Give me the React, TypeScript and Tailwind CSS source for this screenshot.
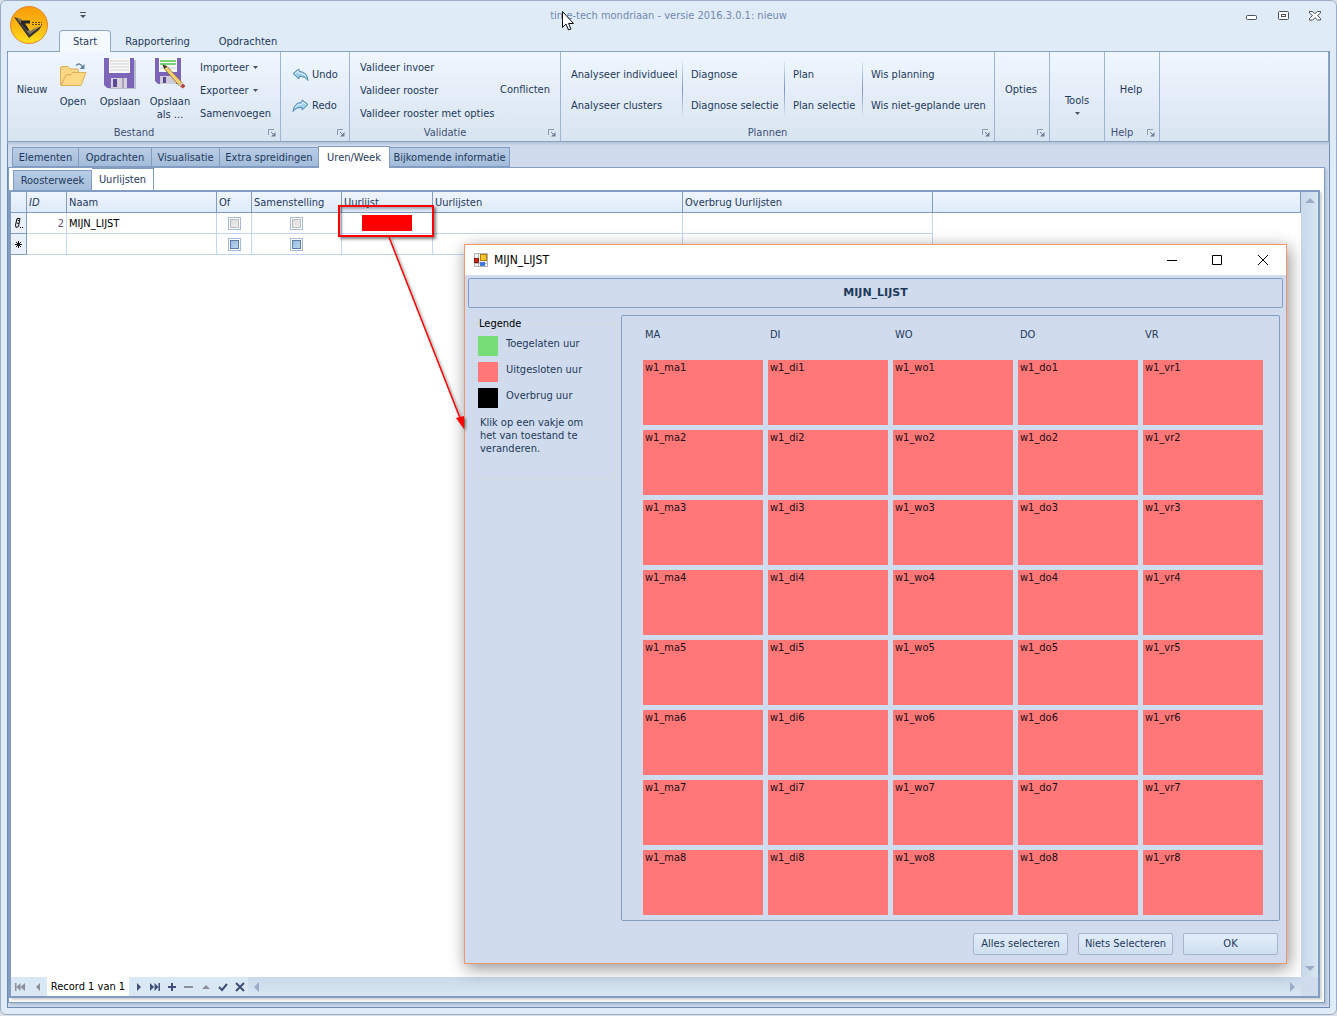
import type { ReactNode } from "react";

const days = [
  { label: "MA", key: "ma" },
  { label: "DI", key: "di" },
  { label: "WO", key: "wo" },
  { label: "DO", key: "do" },
  { label: "VR", key: "vr" },
];

const hours = [1, 2, 3, 4, 5, 6, 7, 8];

const mainTabs = [
  { label: "Elementen", width: "w-[67px]" },
  { label: "Opdrachten", width: "w-[74px]" },
  { label: "Visualisatie", width: "w-[69px]" },
  { label: "Extra spreidingen", width: "w-[100px]" },
  { label: "Uren/Week", width: "w-[72px]" },
  { label: "Bijkomende informatie", width: "w-[121px]" },
];

const columns = ["ID", "Naam", "Of", "Samenstelling", "Uurlijst", "Uurlijsten", "Overbrug Uurlijsten"];

const legend = [
  { label: "Toegelaten uur", color: "bg-[#77dd77]" },
  { label: "Uitgesloten uur", color: "bg-[#ff7777]" },
  { label: "Overbrug uur", color: "bg-black" },
];

function Logo() {
  return (
    <svg width="40" height="40" viewBox="0 0 40 40" aria-hidden="true">
      <defs>
        <linearGradient id="orb" x1="0" y1="0" x2="0" y2="1">
          <stop offset="0" stopColor="#f99d0a" />
          <stop offset="0.55" stopColor="#fdb813" />
          <stop offset="1" stopColor="#ffe01e" />
        </linearGradient>
      </defs>
      <circle cx="20" cy="20" r="18.5" fill="url(#orb)" stroke="#e5862a" />
      <path d="M5 12l3 1 12.500 16L33 20l-3 5-10 8z" fill="#3c3a35" />
      <path d="M8 12.500l4 1.500 9 12 9-5-9.500 8.500z" fill="#7a7264" />
      <path d="M12 15.500h9v3h-5l4 6-1.500 1.500L12 18.500z" fill="#262626" />
      <path d="M23 17.500h10M23 19.500h10" stroke="#5d4c1c" strokeDasharray="2 1" />
    </svg>
  );
}

function FolderIcon() {
  return (
    <svg width="28" height="26" viewBox="0 0 28 26" aria-hidden="true">
      <path d="M1.500 23V6q0-1.500 1.500-1.500h6l2 2.500h7q1.500 0 1.500 1.500V12l-12 1z" fill="#f7d684" stroke="#dfb05a" />
      <path d="M2 23.500L7 13l5-.5 1.500-2h13.500L22 23.500z" fill="#fbd987" stroke="#dfb05a" />
      <path d="M17 3.500q4-3.500 6.500 1.500" fill="none" stroke="#6283a5" strokeWidth="1.500" />
      <path d="M25.500 2v5h-5z" fill="#6283a5" />
    </svg>
  );
}

function FloppyIcon({ pencil = false }: { pencil?: boolean }) {
  return (
    <svg width="32" height="32" viewBox="0 0 32 32" aria-hidden="true">
      {pencil ? (
        <>
          <path d="M1 1h26v26H4l-3-3z" fill="#7c64b8" />
          <path d="M5 1h18v14H5z" fill="#f6f6f6" />
          <path d="M6 4h16M6 7h16" stroke="#4fc64f" strokeWidth="1.500" />
          <path d="M6 11h16" stroke="#cccccf" />
          <path d="M6 19h16v8H6z" fill="#cfcbd8" />
          <path d="M9 20h3v6H9z" fill="#5d4996" />
          <path d="M9 8l4 1.500 15 16-3 3-14-16z" fill="#f5cf72" stroke="#8a6a35" strokeWidth="0.800" />
          <path d="M8.500 7.500l4.500 2-2.500 2.500z" fill="#333" />
          <path d="M25 28.500l3-3 1 1-3 3z" fill="#d6d6d6" />
          <path d="M26 29.500l3-3 2.500 2.500-2.500 2.500z" fill="#b8473f" />
        </>
      ) : (
        <>
          <path d="M2 3h30v29H5z" fill="#b9bfd0" />
          <path d="M0 1h30v30H3l-3-3z" fill="#7c64b8" />
          <path d="M5 1h21v15H5z" fill="#f8f8f8" />
          <path d="M6 4h19M6 7h19M6 10h19M6 13h19" stroke="#d2d2d6" />
          <path d="M7 21h16v10H7z" fill="#d5d2dd" />
          <path d="M9 22h4v8H9z" fill="#5d4996" />
          <path d="M18 21h2v10h-2z" fill="#aaa4ba" />
        </>
      )}
    </svg>
  );
}

function UndoIcon({ flip = false }: { flip?: boolean }) {
  return (
    <svg width="17" height="14" viewBox="0 0 17 14" className={flip ? "-scale-x-100" : ""} aria-hidden="true">
      <path d="M1 5.500L7 1v2.500q8 0 9 9-3-4.500-9-4V11z" fill="#9fd0ec" stroke="#4a86b4" strokeLinejoin="round" />
      <path d="M3 5.500l3.500-2.500v2q5 0 7.500 3" fill="none" stroke="#dff2fb" />
    </svg>
  );
}

function DownArrow() {
  return (
    <svg width="5" height="3" viewBox="0 0 5 3" aria-hidden="true">
      <path d="M0 0h5L2.500 3z" fill="#4a5362" />
    </svg>
  );
}

function LauncherIcon() {
  return (
    <svg width="8" height="8" viewBox="0 0 8 8" aria-hidden="true">
      <path d="M0.500 6V0.500H6" fill="none" stroke="#8b9bb0" />
      <path d="M7.500 3v4.500H3z" fill="#6f7f96" />
      <path d="M3 3l3 3" stroke="#6f7f96" />
    </svg>
  );
}

function RibbonGroup({ caption, width, launcher = true, children }: { caption?: string; width: string; launcher?: boolean; children: ReactNode }) {
  return (
    <section className={`${width} flex flex-col shrink-0 border-r border-[#9fb4d0]`}>
      <div className="flex flex-1">{children}</div>
      <div className="flex h-4 items-center pr-1">
        <span className="flex-1 pr-2 pb-px text-center text-[#3e5075]">{caption}</span>
        {launcher && (
          <button type="button" aria-label="Meer opties">
            <LauncherIcon />
          </button>
        )}
      </div>
    </section>
  );
}

function ButtonColumn({ labels, className = "" }: { labels: string[]; className?: string }) {
  return (
    <div className={`flex flex-col ${className}`}>
      {labels.map((label) => (
        <button key={label} type="button" className="flex flex-1 items-center whitespace-nowrap">
          {label}
        </button>
      ))}
    </div>
  );
}

function Separator() {
  return <div className="mt-[10px] mb-2 w-px bg-linear-to-b from-[#d9e4f1] via-[#7f98bf] to-[#d9e4f1]" />;
}

function Ribbon() {
  return (
    <div className="flex h-[91px] border-y border-r border-[#8ba3c0] bg-linear-to-b from-[#eff6fe] to-[#d8e4f1] shadow-[0_2px_2px_#b4c4d8]">
      <RibbonGroup caption="Bestand" width="w-[273px]">
        <button type="button" className="w-[48px] pt-[3px]">Nieuw</button>
        <button type="button" className="flex w-[34px] flex-col items-center gap-[7px] pt-[10px]">
          <FolderIcon />
          <span className="leading-[13px]">Open</span>
        </button>
        <button type="button" className="flex w-[60px] flex-col items-center gap-1 pt-[5px]">
          <FloppyIcon />
          <span className="pt-0.5 leading-[13px]">Opslaan</span>
        </button>
        <button type="button" className="flex w-[40px] flex-col items-center gap-1 pt-[5px]">
          <FloppyIcon pencil />
          <span className="pt-0.5 leading-[13px]">Opslaan als ...</span>
        </button>
        <div className="flex flex-col pt-[4px] pl-[10px]">
          <button type="button" className="flex flex-1 items-center gap-1">Importeer <DownArrow /></button>
          <button type="button" className="flex flex-1 items-center gap-1">Exporteer <DownArrow /></button>
          <button type="button" className="flex flex-1 items-center">Samenvoegen</button>
        </div>
      </RibbonGroup>
      <RibbonGroup width="w-[69px]">
        <div className="flex flex-col pt-[8px] pb-[4px] pl-[11px]">
          <button type="button" className="flex flex-1 items-center gap-[3px]"><UndoIcon />Undo</button>
          <button type="button" className="flex flex-1 items-center gap-[3px]"><UndoIcon flip />Redo</button>
        </div>
      </RibbonGroup>
      <RibbonGroup caption="Validatie" width="w-[211px]">
        <ButtonColumn labels={["Valideer invoer", "Valideer rooster", "Valideer rooster met opties"]} className="w-[140px] pt-[4px] pl-[10px]" />
        <button type="button" className="pt-[3px] pl-[10px]">Conflicten</button>
      </RibbonGroup>
      <RibbonGroup caption="Plannen" width="w-[434px]">
        <ButtonColumn labels={["Analyseer individueel", "Analyseer clusters"]} className="w-[121px] pt-[8px] pb-[4px] pl-[10px]" />
        <Separator />
        <ButtonColumn labels={["Diagnose", "Diagnose selectie"]} className="w-[101px] pt-[8px] pb-[4px] pl-2" />
        <Separator />
        <ButtonColumn labels={["Plan", "Plan selectie"]} className="w-[77px] pt-[8px] pb-[4px] pl-2" />
        <Separator />
        <ButtonColumn labels={["Wis planning", "Wis niet-geplande uren"]} className="pt-[8px] pb-[4px] pl-2" />
      </RibbonGroup>
      <RibbonGroup width="w-[55px]">
        <button type="button" className="flex-1 pt-[3px] pr-0.5">Opties</button>
      </RibbonGroup>
      <RibbonGroup width="w-[55px]" launcher={false}>
        <button type="button" className="flex flex-1 flex-col items-center gap-1 pt-[42px]">
          Tools
          <DownArrow />
        </button>
      </RibbonGroup>
      <RibbonGroup caption="Help" width="w-[55px]">
        <button type="button" className="flex-1 pt-[3px] pr-0.5">Help</button>
      </RibbonGroup>
    </div>
  );
}

function TitleBar() {
  return (
    <header className="relative">
      <button type="button" aria-label="Toepassingsmenu" className="absolute top-1 left-2">
        <Logo />
      </button>
      <div className="grid h-[29px] grid-cols-[1fr_auto_1fr] items-center text-[#7289b0]">
        <button type="button" aria-label="Werkbalk aanpassen" className="ml-[79px] w-[6px]">
          <svg width="6" height="7" viewBox="0 0 6 7" aria-hidden="true">
            <path d="M0 0.500h6" stroke="#4c535c" />
            <path d="M0 3h6L3 6z" fill="#4c535c" />
          </svg>
        </button>
        <h1>time-tech mondriaan - versie 2016.3.0.1: nieuw</h1>
        <div className="flex items-center justify-end gap-5 pr-[15px]">
          <button type="button" aria-label="Minimaliseren">
            <svg width="12" height="10" viewBox="0 0 12 10" aria-hidden="true">
              <rect x="1.500" y="4.500" width="10" height="4" rx="1" fill="#fff" stroke="#4c4f5c" />
            </svg>
          </button>
          <button type="button" aria-label="Maximaliseren">
            <svg width="12" height="10" viewBox="0 0 12 10" aria-hidden="true">
              <rect x="1.500" y="0.500" width="10" height="8" rx="1" fill="#fff" stroke="#4c4f5c" />
              <rect x="4.500" y="3.500" width="4" height="2" fill="#fff" stroke="#4c4f5c" />
            </svg>
          </button>
          <button type="button" aria-label="Sluiten">
            <svg width="12" height="10" viewBox="0 0 12 10" aria-hidden="true">
              <path d="M0.500 0.500h3l2.500 2 2.500-2h3v1.500L8.500 4.500l3 3V9h-3L6 6.800 3.500 9h-3V7.500l3-3-3-2.500z" fill="#fff" stroke="#4c4f5c" />
            </svg>
          </button>
        </div>
      </div>
      <nav className="flex h-[21px] pl-[58px]">
        <button type="button" className="relative -mb-px w-[52px] rounded-t-sm border border-b-0 border-[#8fa9c9] bg-[#f4f9fe] pt-px">Start</button>
        <button type="button" className="w-[93px] pt-0.5">Rapportering</button>
        <button type="button" className="w-[88px] pt-0.5">Opdrachten</button>
      </nav>
    </header>
  );
}

function GridCheck({ label, disabled = false }: { label: string; disabled?: boolean }) {
  return (
    <input
      type="checkbox"
      aria-label={label}
      disabled={disabled}
      className="mx-auto block h-[13px] w-[13px] appearance-none border border-[#a4bbd9] bg-linear-to-br from-[#8fb8dc] to-[#c5dcf0] shadow-[inset_0_0_0_1px_#fff,inset_0_0_0_2px_#5c7ba6] disabled:from-[#d8d9dc] disabled:to-[#f2f2f3] disabled:shadow-[inset_0_0_0_1px_#fff,inset_0_0_0_2px_#b9bdc4]"
    />
  );
}

function HourListTable() {
  const cell = "h-[21px] border-r border-b border-[#c3d7f2] p-0";
  const marker = "border-r border-b border-[#839dc2] bg-[#eaf1fa] p-0";
  return (
    <table className="w-full table-fixed border-separate border-spacing-0">
      <colgroup>
        <col className="w-[16px]" />
        <col className="w-[40px]" />
        <col className="w-[150px]" />
        <col className="w-[35px]" />
        <col className="w-[90px]" />
        <col className="w-[91px]" />
        <col className="w-[250px]" />
        <col className="w-[250px]" />
        <col />
      </colgroup>
      <thead>
        <tr className="h-[21px] bg-linear-to-b from-[#eff5fd] to-[#deeafa] text-left text-[#1e395b]">
          <th className="border-r border-b border-[#839dc2]" />
          {columns.map((name) => (
            <th key={name} className="border-r border-b border-[#839dc2] px-0.5 pt-0.5 pb-0 font-normal whitespace-nowrap">
              {name === "ID" ? <em>{name}</em> : name}
            </th>
          ))}
          <th className="border-r border-b border-[#839dc2]" />
        </tr>
      </thead>
      <tbody className="text-black">
        <tr>
          <td className={marker}>
            <svg width="9" height="12" viewBox="0 0 9 12" className="mx-auto" aria-hidden="true">
              <path d="M3 1.500h3L4.500 9.500 2 10.500 1.500 8zM3.500 3l2 1M2.500 6l2.500.5" fill="none" stroke="#111" />
              <path d="M6 10.500h1M8 10.500h1" stroke="#111" />
            </svg>
          </td>
          <td className="h-[21px] border-r border-b border-[#c3d7f2] pt-0.5 pr-0.5 text-right text-[#6b4a6b]">2</td>
          <td className="h-[21px] border-r border-b border-[#c3d7f2] pt-0.5 pl-0.5">MIJN_LIJST</td>
          <td className={cell}><GridCheck label="Of" disabled /></td>
          <td className={cell}><GridCheck label="Samenstelling" disabled /></td>
          <td className={cell}>
            <div className="mx-auto h-4 w-[50px] bg-[#ff0000]" />
          </td>
          <td className={cell} />
          <td className={cell} />
          <td />
        </tr>
        <tr>
          <td className={marker}>
            <svg width="7" height="7" viewBox="0 0 7 7" className="mx-auto" aria-hidden="true">
              <path d="M3.500 0v7M0 3.500h7M1 1l5 5M6 1L1 6" stroke="#111" />
            </svg>
          </td>
          <td className={cell} />
          <td className={cell} />
          <td className={cell}><GridCheck label="Of, nieuwe rij" /></td>
          <td className={cell}><GridCheck label="Samenstelling, nieuwe rij" /></td>
          <td className={cell} />
          <td className={cell} />
          <td className={cell} />
          <td />
        </tr>
      </tbody>
    </table>
  );
}

function NavButton({ label, d, color = "#3f5078", stroke = false }: { label: string; d: string; color?: string; stroke?: boolean }) {
  return (
    <button type="button" aria-label={label} className="flex w-[17px] justify-center">
      <svg width="10" height="10" viewBox="0 0 10 10" aria-hidden="true">
        <path d={d} fill={stroke ? "none" : color} stroke={stroke ? color : "none"} strokeWidth="2" />
      </svg>
    </button>
  );
}

function RecordBar() {
  return (
    <div className="flex h-[19px] bg-linear-to-b from-[#c9d9ea] to-[#d9e6f2]">
      <div className="flex items-center bg-[#dae7f5]">
        <NavButton label="Eerste" color="#8b8f98" d="M0 1h1.500v8H0zM5.500 1v8L1.500 5zM10 1v8L5.500 5z" />
        <div className="flex w-[19px] justify-center">
          <NavButton label="Vorige" color="#8b8f98" d="M7 1v8L3 5z" />
        </div>
        <span className="flex h-full w-[82px] items-center justify-center bg-white whitespace-nowrap text-black">Record 1 van 1</span>
        <NavButton label="Volgende" d="M4 1v8l4-4z" />
        <NavButton label="Laatste" d="M0 1v8l4-4zM4.500 1v8l4-4zM8.500 1H10v8H8.500z" />
        <NavButton label="Toevoegen" d="M5 1v8M1 5h8" stroke />
        <NavButton label="Verwijderen" color="#8b8f98" d="M0 5h9" stroke />
        <NavButton label="Bewerken" color="#8b8f98" d="M1 7h8L5 3z" />
        <NavButton label="Opslaan" d="M1 5l3 3 5-6" stroke />
        <NavButton label="Annuleren" d="M1 1l8 8M9 1L1 9" stroke />
      </div>
      <div className="flex flex-1 items-center justify-between pr-px">
        <NavButton label="Schuif naar links" color="#9cabc7" d="M7 0v10L2 5z" />
        <NavButton label="Schuif naar rechts" color="#9cabc7" d="M3 0v10l5-5z" />
      </div>
      <div className="w-[17px] bg-[#d0dcec]" />
    </div>
  );
}

function HourDialog() {
  return (
    <section
      role="dialog"
      aria-label="MIJN_LIJST"
      className="absolute top-[244px] right-[50px] left-[464px] border border-[#f0966e] bg-[#d0dced] pb-2 shadow-[2px_4px_16px_rgba(0,0,0,0.45)]"
    >
      <div className="flex h-[30px] items-center bg-white pr-[17px] pb-px pl-[9px] text-black">
        <svg width="14" height="14" viewBox="0 0 14 14" aria-hidden="true">
          <rect x="0.500" y="0.500" width="13" height="13" fill="#f4f4f4" stroke="#b5b5b5" />
          <path d="M4.500 0v14M0 10.500h14" stroke="#b5b5b5" />
          <rect x="0.500" y="5.500" width="4" height="4" fill="#c22a1c" stroke="#8a1a12" />
          <rect x="6.500" y="1.500" width="6" height="6" fill="#fbc62c" stroke="#b37d10" />
          <rect x="6" y="9" width="5" height="4" fill="#3f79dd" />
        </svg>
        <h2 className="flex-1 pl-1.5 text-[12px]">MIJN_LIJST</h2>
        <div className="flex gap-[34px]">
          <button type="button" aria-label="Minimaliseren">
            <svg width="12" height="12" viewBox="0 0 12 12" aria-hidden="true"><path d="M2 6.500h10" stroke="#000" /></svg>
          </button>
          <button type="button" aria-label="Maximaliseren">
            <svg width="12" height="12" viewBox="0 0 12 12" aria-hidden="true"><path d="M1.500 1.500h9v9h-9z" fill="none" stroke="#000" /></svg>
          </button>
          <button type="button" aria-label="Sluiten">
            <svg width="12" height="12" viewBox="0 0 12 12" aria-hidden="true"><path d="M1 1l10 10M11 1L1 11" stroke="#000" /></svg>
          </button>
        </div>
      </div>
      <div className="mx-[3px] mt-[3px] flex h-[30px] items-center justify-center rounded-xs border border-[#839dc2] font-['DejaVu_Sans',sans-serif] font-bold">MIJN_LIJST</div>
      <div className="mt-[7px] mr-[6px] ml-[7px] flex items-start gap-[5px]">
        <fieldset className="h-[163px] w-[144px] border border-[#d5dade] px-[5px]">
          <legend className="px-px pt-px leading-4 text-black">Legende</legend>
          <ul className="flex flex-col gap-[6px] pt-1">
            {legend.map((item) => (
              <li key={item.label} className="flex h-5 gap-2">
                <span className={`h-5 w-5 ${item.color}`} />
                <span className="leading-4">{item.label}</span>
              </li>
            ))}
          </ul>
          <p className="pt-2 pl-0.5 leading-[13px]">
            Klik op een vakje om
            <br />
            het van toestand te
            <br />
            veranderen.
          </p>
        </fieldset>
        <div className="flex-1 rounded-xs border border-[#839dc2] px-4 pb-[5px] pl-[21px]">
          <div className="grid grid-cols-5 gap-[5px]">
            {days.map((day) => (
              <div key={day.key} className="h-[39px] pt-[11px] pl-0.5 leading-[15px]">{day.label}</div>
            ))}
            {hours.map((hour) =>
              days.map((day) => (
                <button key={day.key + hour} type="button" className="flex h-[65px] items-start bg-[#ff7777] pl-0.5 text-left leading-[15px] text-[#200c14]">
                  {`w1_${day.key}${hour}`}
                </button>
              ))
            )}
          </div>
        </div>
      </div>
      <div className="mt-3 flex justify-end gap-[10px] pr-2">
        {["Alles selecteren", "Niets Selecteren", "OK"].map((label) => (
          <button key={label} type="button" className="h-[22px] w-[95px] rounded-xs border border-[#a5b5ce] bg-linear-to-b from-[#e2edfa] to-[#cfdff0] whitespace-nowrap">
            {label}
          </button>
        ))}
      </div>
    </section>
  );
}

function Annotations() {
  return (
    <>
      <div className="pointer-events-none absolute top-[205px] left-[338px] h-8 w-24 border-2 border-[#ff0000] shadow-[2px_2px_3px_rgba(0,0,0,0.5),inset_2px_2px_3px_rgba(0,0,0,0.3)]" />
      <svg width="90" height="200" viewBox="0 0 90 200" className="pointer-events-none absolute top-[236px] left-[384px] drop-shadow-[2px_2px_1px_rgba(0,0,0,0.4)]" aria-hidden="true">
        <path d="M5 1l73 186" stroke="#ff0000" strokeWidth="1.500" />
        <path d="M80 193l-8-11 8-2z" fill="#ff0000" />
      </svg>
      <svg width="13" height="20" viewBox="0 0 13 20" className="pointer-events-none absolute top-[11px] left-[562px]" aria-hidden="true">
        <path d="M0.500 0.500v16l3.500-3.500 2.500 6 2.500-1-2.500-5.500h5z" fill="#fff" stroke="#111" />
      </svg>
    </>
  );
}

export default function App() {
  return (
    <div className="relative flex min-h-screen flex-col bg-[#dcdfe4] pb-px font-['DejaVu_Sans_Condensed','DejaVu_Sans',sans-serif] text-[11px] leading-[14px] text-[#1e395b]">
      <div className="flex flex-1 flex-col rounded-t-md rounded-b-md border border-[#9badc4] bg-[#dfebf7]">
        <TitleBar />
        <div className="mx-[6px] mb-[6px] flex flex-1 flex-col border-x border-b border-[#6f8cb3] bg-[#d0dced]">
          <Ribbon />
          <nav className="relative z-10 mt-1 flex h-[21px] items-end pl-1">
            {mainTabs.map((tab) =>
              tab.label === "Uren/Week" ? (
                <button key={tab.label} type="button" className={`${tab.width} relative -mr-px -mb-px h-[22px] border border-b-0 border-[#839dc2] bg-white`}>
                  {tab.label}
                </button>
              ) : (
                <button key={tab.label} type="button" className={`${tab.width} -mr-px h-5 border border-[#839dc2] bg-linear-to-b from-[#b9cde5] to-[#a4bcdb] pt-0.5 whitespace-nowrap`}>
                  {tab.label}
                </button>
              )
            )}
          </nav>
          <div className="mr-1 mb-1 flex flex-1 flex-col border border-[#839dc2] bg-white pr-1 pb-1 shadow-[2px_2px_2px_#b0bfd4]">
            <nav className="flex h-[22px] items-end pl-1">
              <button type="button" className="h-5 w-[79px] border border-b-0 border-[#839dc2] bg-linear-to-b from-[#b9cde5] to-[#a4bcdb] pt-px">Roosterweek</button>
              <button type="button" className="h-[22px] w-[62px] border border-b-0 border-l-0 border-[#839dc2] bg-white pt-px">Uurlijsten</button>
            </nav>
            <div className="flex flex-1 flex-col border-2 border-[#839dc2] shadow-[2px_2px_2px_#d5d5d5]">
              <div className="flex flex-1 items-stretch">
                <div className="min-w-0 flex-1">
                  <HourListTable />
                </div>
                <div className="flex w-[17px] flex-col items-center justify-between bg-linear-to-r from-[#c9d9ea] to-[#d9e6f2] py-1">
                  <NavButton label="Schuif omhoog" color="#9cabc7" d="M0 7h10L5 2z" />
                  <NavButton label="Schuif omlaag" color="#9cabc7" d="M0 3h10L5 8z" />
                </div>
              </div>
              <RecordBar />
            </div>
          </div>
        </div>
      </div>
      <HourDialog />
      <Annotations />
    </div>
  );
}
